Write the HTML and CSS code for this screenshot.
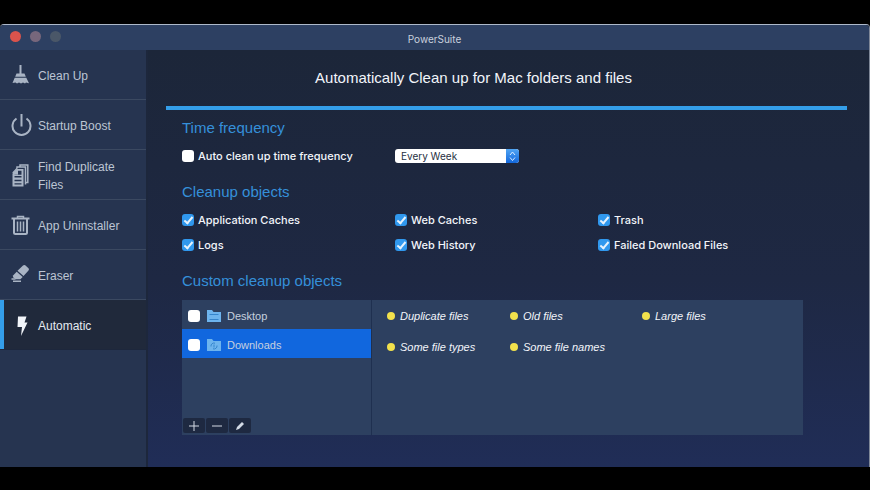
FILE: index.html
```
<!DOCTYPE html>
<html lang="en">
<head>
  <meta charset="UTF-8">
  <meta name="viewport" content="width=device-width, initial-scale=1.0">
  <title>PowerSuite</title>
  <link rel="stylesheet" href="styles.css">
</head>
<body>
  <div class="window">
    <header class="titlebar">
      <div class="lights">
        <button class="light close" aria-label="Close"></button>
        <button class="light minimize" aria-label="Minimize"></button>
        <button class="light maximize" aria-label="Zoom"></button>
      </div>
      <span class="app-name">PowerSuite</span>
    </header>

    <div class="layout">
      <!-- Sidebar -->
      <nav class="sidebar">
        <a href="#cleanup" class="nav-item">
          <svg class="nav-icon" viewBox="0 0 22 24">
            <path d="M9.500 1h2v9h-2z"/>
            <path d="M6.500 9.500h8l1.300 3.200H5.200z"/>
            <path d="M4.700 13.700h11.600l2.700 5.600-3-.8-1 1-2-1-2 1-2-1-2 1-1.500-1-3 .5z"/>
          </svg>
          <span>Clean Up</span>
        </a>
        <a href="#startup" class="nav-item">
          <svg class="nav-icon" viewBox="0 0 22 24">
            <path class="line" d="M6.500 4.500a9 9 0 1 0 10 0M11.500 0v12.500"/>
          </svg>
          <span>Startup Boost</span>
        </a>
        <a href="#duplicates" class="nav-item">
          <svg class="nav-icon" viewBox="0 0 22 24">
            <path fill-rule="evenodd" d="M7 5h6.500v17.500H2.500V9.500zM4.500 12v1.500h7V12zm0 3.700v1.500h7v-1.500zm0 3.500v1.300h7v-1.300zM8 6.800v3.700H4.500v.3h7v-4z"/>
            <path class="thin" d="M7 4.500V3h8.500v17.500M10 2.500V1h7.800v17.500h-2M2.800 9 7 4.500"/>
          </svg>
          <span>Find Duplicate Files</span>
        </a>
        <a href="#uninstaller" class="nav-item">
          <svg class="nav-icon" viewBox="0 0 22 24">
            <path class="line" d="M1.500 4.500h18M4 5v13.500q0 1.500 1.500 1.500h10q1.500 0 1.500-1.500V5"/>
            <path class="thin" d="M7.500 4V2.500h6V4M7.500 7.500v10M10.500 7.500v10M13.500 7.500v10"/>
          </svg>
          <span>App Uninstaller</span>
        </a>
        <a href="#eraser" class="nav-item">
          <svg class="nav-icon" viewBox="0 0 22 24">
            <path d="M13 1.500q1-1 2.200-.2l3.300 3q1 1 0 2.200l-5 5.500-6-5.200z"/>
            <path d="M6.700 7.700l6 5.200-2.300 2.300H5.500l-2.200-2q-.9-1 0-2z"/>
            <path class="thin" d="M1.500 15h4M3 17.200h8"/>
          </svg>
          <span>Eraser</span>
        </a>
        <a href="#automatic" class="nav-item active">
          <svg class="nav-icon" viewBox="0 0 22 24">
            <path d="M8 2.500h8.500l-2 6h3L11 22l1-9H7.500z"/>
          </svg>
          <span>Automatic</span>
        </a>
      </nav>

      <!-- Main Content -->
      <main class="content">
        <h1>Automatically Clean up for Mac folders and files</h1>

        <section>
          <h2>Time frequency</h2>
          <div class="options">
            <label class="check"><input type="checkbox"> Auto clean up time frequency</label>
            <div class="select-box">
              <select aria-label="Time frequency">
                <option>Every Day</option>
                <option selected>Every Week</option>
                <option>Every Month</option>
              </select>
              <svg class="arrows" viewBox="0 0 13 14">
                <path d="M4 6l2.500-3L9 6M4 8.500l2.500 3 2.500-3"/>
              </svg>
            </div>
          </div>
        </section>

        <section>
          <h2>Cleanup objects</h2>
          <div class="options">
            <label class="check"><input type="checkbox" checked> Application Caches</label>
            <label class="check"><input type="checkbox" checked> Web Caches</label>
            <label class="check"><input type="checkbox" checked> Trash</label>
            <label class="check"><input type="checkbox" checked> Logs</label>
            <label class="check"><input type="checkbox" checked> Web History</label>
            <label class="check"><input type="checkbox" checked> Failed Download Files</label>
          </div>
        </section>

        <section>
          <h2>Custom cleanup objects</h2>
          <div class="panel">
            <div class="folders">
              <label class="folder">
                <input type="checkbox">
                <svg class="folder-icon" viewBox="0 0 14 12">
                  <path d="M0 0h5l1.500 2H14v10H0z"/>
                  <path class="mark" d="M2.500 4.500h9M2.500 9.500h9"/>
                </svg>
                <span>Desktop</span>
              </label>
              <label class="folder selected">
                <input type="checkbox">
                <svg class="folder-icon" viewBox="0 0 14 12">
                  <path d="M0 0h5l1.500 2H14v10H0z"/>
                  <path class="mark" d="M4 7.500A3 3 0 0 1 8 4.200M10 6.500A3 3 0 0 1 6 9.800M7 5.500v3"/>
                </svg>
                <span>Downloads</span>
              </label>
              <div class="tools">
                <button aria-label="Add"><svg viewBox="0 0 12 12"><path d="M1 6h10M6 1v10"/></svg></button>
                <button aria-label="Remove"><svg viewBox="0 0 12 12"><path d="M1 6h10"/></svg></button>
                <button aria-label="Edit"><svg viewBox="0 0 12 12"><path class="pencil" d="M2 10l1-3 5-5 2 2-5 5z"/></svg></button>
              </div>
            </div>
            <ul class="kinds">
              <li>Duplicate files</li>
              <li>Old files</li>
              <li>Large files</li>
              <li>Some file types</li>
              <li>Some file names</li>
            </ul>
          </div>
        </section>
      </main>
    </div>
  </div>
</body>
</html>
```
FILE: styles.css
```
/* General Styles */
*, *::before, *::after {
  box-sizing: border-box;
}

body {
  margin: 0;
  padding: 24px 0 23px;
  min-height: 100vh;
  display: flex;
  background: #000;
  color: #f2f5fa;
  font-family: "Liberation Sans", Arial, sans-serif;
}

h1, h2, ul {
  margin: 0;
  padding: 0;
  font-weight: normal;
}

button {
  border: none;
  padding: 0;
}

.window {
  flex: 1;
  display: flex;
  flex-direction: column;
  border-top: 1px solid #aeb9ca;
  border-right: 1px solid #7e8797;
  border-radius: 4px 4px 0 0;
  overflow: hidden;
}

/* Title Bar */
.titlebar {
  display: grid;
  grid-template-columns: 1fr auto 1fr;
  align-items: center;
  height: 25px;
  background: #2d4062;
}

.lights {
  display: flex;
  gap: 9px;
  padding: 0 10px 2px;
}

.light {
  width: 11px;
  height: 11px;
  border-radius: 50%;
}

.close {
  background: #d9534c;
}

.minimize {
  background: #77677c;
}

.maximize {
  background: #4a5768;
}

.app-name {
  padding-top: 3px;
  font-family: Inter, sans-serif;
  font-size: 10px;
  color: #c9d1de;
}

.layout {
  flex: 1;
  display: flex;
}

/* Sidebar */
.sidebar {
  width: 148px;
  flex-shrink: 0;
  background: #263450;
  border-right: 2px solid #1d273c;
}

.nav-item {
  display: flex;
  align-items: center;
  gap: 6px;
  height: 50px;
  padding: 3px 20px 0 10px;
  border-bottom: 1px solid #3b4961;
  color: #bcc5d3;
  font-size: 12px;
  line-height: 18px;
  text-decoration: none;
}

.nav-icon {
  width: 22px;
  height: 24px;
  flex-shrink: 0;
  fill: #a9b4c4;
}

.nav-icon .line, .nav-icon .thin {
  fill: none;
  stroke: #a9b4c4;
  stroke-width: 2;
}

.nav-icon .thin {
  stroke-width: 1.500;
}

.active {
  border-bottom-color: #1d273c;
  background: #20293b;
  box-shadow: inset 4px 0 #349ee9;
  color: #e4e9f1;
}

.active .nav-icon {
  fill: #f2f5fa;
}

/* Main Content */
.content {
  flex: 1;
  padding: 0 22px 20px 18px;
  background: linear-gradient(#1c2639, #1e2843 55%, #202d57);
}

h1 {
  padding: 18px 66px 18px 0;
  border-bottom: 4px solid #349ee9;
  font-size: 15px;
  line-height: 20px;
  text-align: center;
}

section {
  padding: 8px 0 9px 16px;
}

h2 {
  margin-bottom: 9px;
  color: #3590da;
  font-size: 15px;
  line-height: 20px;
}

.options {
  display: grid;
  grid-template-columns: 213fr 203fr 249fr;
  align-items: center;
  row-gap: 7px;
}

.check {
  display: flex;
  align-items: center;
  gap: 4px;
  font-family: Inter, sans-serif;
  font-size: 11px;
  font-weight: 500;
  line-height: 18px;
}

input {
  appearance: none;
  width: 12px;
  height: 12px;
  margin: 0;
  border-radius: 3px;
  background: #fff;
}

input:checked {
  background: #3098ee;
}

input:checked::after {
  content: "";
  display: block;
  width: 5px;
  height: 9px;
  margin: 1px 0 0 4px;
  border: solid #e6f2fd;
  border-width: 0 2px 2px 0;
  transform: rotate(40deg);
}

.select-box {
  position: relative;
  width: 124px;
  height: 14px;
}

select {
  appearance: none;
  display: block;
  width: 100%;
  height: 100%;
  padding: 0 18px 0 6px;
  border: none;
  border-radius: 3px;
  background: #fff;
  color: #273042;
  font-family: Inter, sans-serif;
  font-size: 10px;
}

.arrows {
  position: absolute;
  top: 0;
  right: 0;
  width: 13px;
  height: 14px;
  border-radius: 0 3px 3px 0;
  background: linear-gradient(#51a5f3, #1267dc);
  fill: none;
  stroke: #d8eaff;
  pointer-events: none;
}

/* Custom Objects Panel */
.panel {
  display: flex;
  min-height: 135px;
  margin-right: 44px;
  background: #2d4060;
}

.folders {
  display: flex;
  flex-direction: column;
  width: 190px;
  border-right: 1px solid #1f3050;
}

.folder {
  display: flex;
  align-items: center;
  height: 29px;
  padding: 2px 6px 0;
  color: #c6d0df;
  font-size: 11px;
}

.selected {
  background: #1167de;
}

.folder-icon {
  width: 14px;
  height: 12px;
  margin: 0 6px 0 7px;
  fill: #6db4ee;
}

.mark {
  fill: none;
  stroke: #3585cd;
}

.tools {
  display: flex;
  gap: 1px;
  margin-top: auto;
  padding: 0 1px 2px;
}

.tools button {
  display: grid;
  place-items: center;
  width: 22px;
  height: 15px;
  border-radius: 2px;
  background: #1e2941;
}

.tools svg {
  width: 12px;
  height: 12px;
  stroke: #d3dae5;
}

.tools .pencil {
  fill: #d3dae5;
  stroke: none;
}

.kinds {
  flex: 1;
  display: grid;
  grid-template-columns: 123fr 132fr 161fr;
  align-content: start;
  row-gap: 13px;
  padding: 7px 0 0 15px;
  list-style: none;
  font-size: 11px;
  font-style: italic;
  line-height: 18px;
}

.kinds li {
  display: flex;
  align-items: center;
  gap: 5px;
}

.kinds li::before {
  content: "";
  width: 8px;
  height: 8px;
  border-radius: 50%;
  background: #f2e14c;
}
```
